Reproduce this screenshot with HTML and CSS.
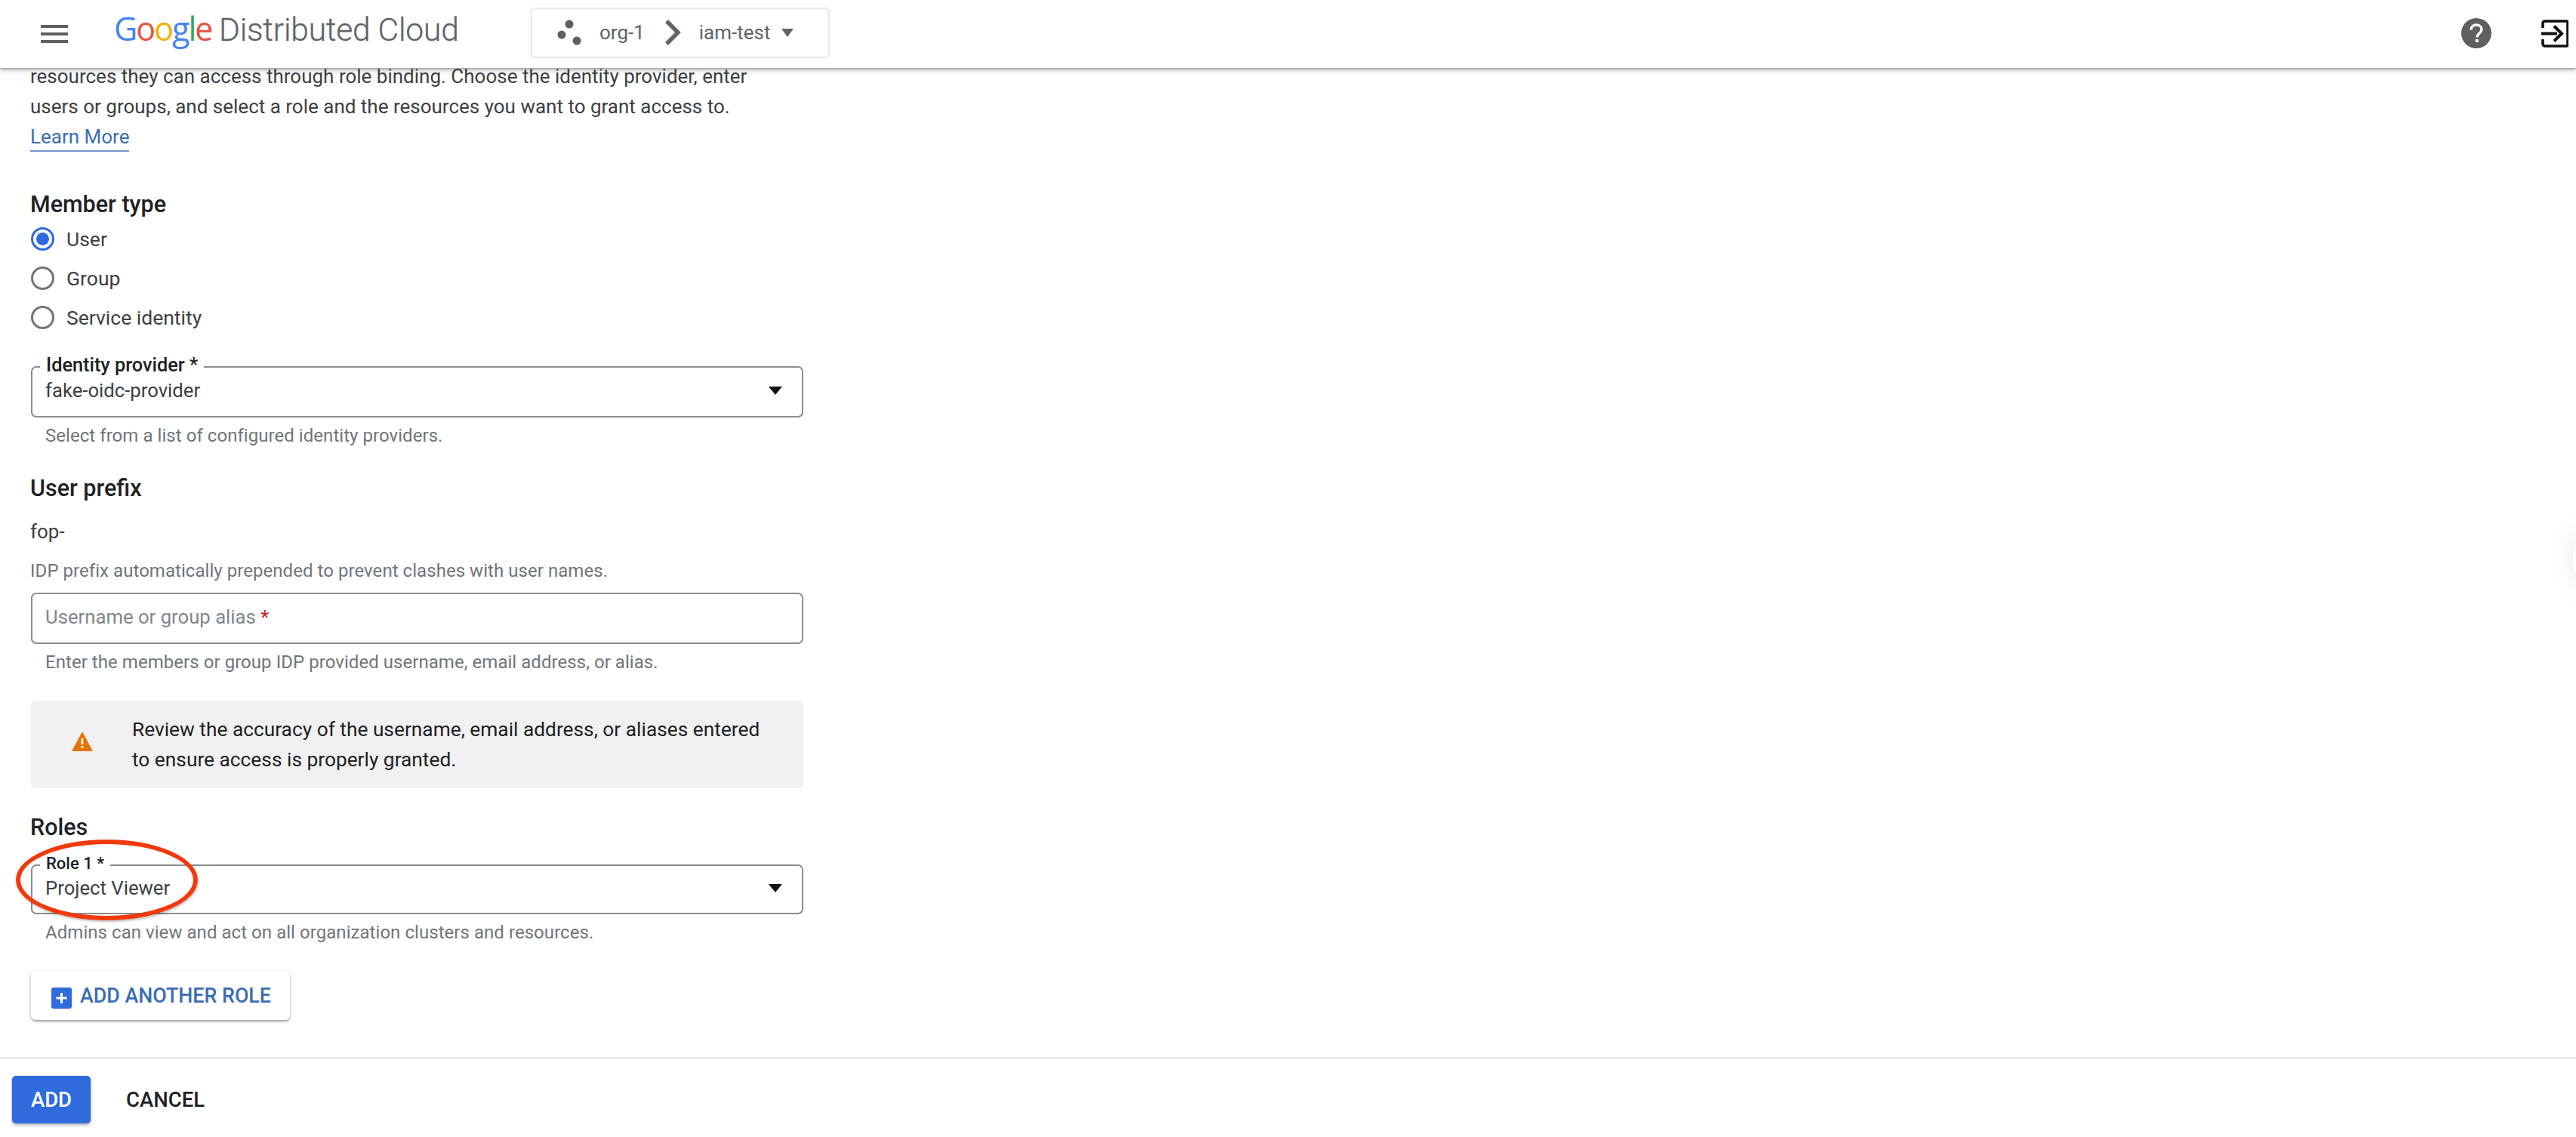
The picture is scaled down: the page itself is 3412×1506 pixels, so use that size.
FILE: index.html
```html
<!DOCTYPE html>
<html lang="en">
<head>
<meta charset="utf-8">
<title>Google Distributed Cloud</title>
<link rel="stylesheet" href="styles.css">
</head>
<body>
<header class="topbar">
  <svg class="menu-icon" viewBox="0 0 36 24"><path d="M0 0h36v4H0zM0 10h36v4H0zM0 20h36v4H0z"/></svg>
  <div class="logo"><span class="logo-google"><span class="g-blue">G</span><span class="g-red">o</span><span class="g-yellow">o</span><span class="g-blue">g</span><span class="g-green">l</span><span class="g-red">e</span></span><span class="logo-product">Distributed Cloud</span></div>
  <div class="selector">
    <svg class="org-icon" viewBox="0 0 32 34"><circle cx="16" cy="6" r="5.500"/><circle cx="6" cy="20" r="5.500"/><circle cx="26" cy="28" r="5.500"/></svg>
    <span class="sel-text">org-1</span>
    <svg class="chev" viewBox="0 0 24 34"><path d="M4 2l15 15L4 32" fill="none" stroke="#5f6368" stroke-width="5.500"/></svg>
    <span class="sel-text">iam-test</span>
    <span class="sel-caret"></span>
  </div>
  <div class="top-actions">
    <svg class="help-icon" viewBox="0 0 40 40"><circle cx="20" cy="20" r="20" fill="#5f5f5f"/><path d="M13 15.500c0-4 3-6.500 7-6.500s7 2.600 7 6c0 5-6 5-6 10.500" fill="none" stroke="#fff" stroke-width="3.400"/><rect x="18.800" y="28" width="4" height="4" fill="#fff"/></svg>
    <svg class="exit-icon" viewBox="0 0 36 37"><path d="M2 11V5a3 3 0 0 1 3-3h28a2 2 0 0 1 2 2v29a2 2 0 0 1-2 2H5a3 3 0 0 1-3-3v-6" fill="none" stroke="#111" stroke-width="3.600"/><path d="M0 16.500h21v4H0z" fill="#111"/><path d="M17 8.500l10 10-10 10" fill="none" stroke="#111" stroke-width="4"/></svg>
  </div>
</header>

<main class="content">
  <p class="intro">resources they can access through role binding. Choose the identity provider, enter<br>users or groups, and select a role and the resources you want to grant access to.<br><a class="learn" href="#">Learn More</a></p>

  <h2 class="section section-member">Member type</h2>
  <div class="radios">
    <label class="radio-row"><span class="radio radio-on"></span>User</label>
    <label class="radio-row"><span class="radio"></span>Group</label>
    <label class="radio-row"><span class="radio"></span>Service identity</label>
  </div>

  <div class="field field-idp">
    <span class="float-label">Identity provider *</span>
    <span class="value">fake-oidc-provider</span>
    <span class="caret"></span>
  </div>
  <p class="hint hint-inset">Select from a list of configured identity providers.</p>

  <h2 class="section section-prefix">User prefix</h2>
  <p class="prefix">fop-</p>
  <p class="hint hint-prefix">IDP prefix automatically prepended to prevent clashes with user names.</p>
  <div class="field field-user">
    <span class="placeholder">Username or group alias <span class="req">*</span></span>
  </div>
  <p class="hint hint-inset">Enter the members or group IDP provided username, email address, or alias.</p>

  <div class="notice">
    <svg class="warn-icon" viewBox="0 0 28 26"><path d="M14 0L28 26H0z" fill="#e37400"/><path d="M12.600 9h2.800v8h-2.800zM12.600 19h2.800v3h-2.800z" fill="#f1f1f1"/></svg>
    <p class="notice-text">Review the accuracy of the username, email address, or aliases entered<br>to ensure access is properly granted.</p>
  </div>

  <h2 class="section section-roles">Roles</h2>
  <div class="field field-role">
    <span class="float-label float-label-short">Role 1 *</span>
    <span class="value">Project Viewer</span>
    <span class="caret"></span>
    <span class="callout"></span>
  </div>
  <p class="hint hint-inset">Admins can view and act on all organization clusters and resources.</p>

  <button class="add-role" type="button">
    <svg class="plus-icon" viewBox="0 0 27 28"><rect width="27" height="28" rx="3" fill="#2f6bdc"/><path d="M12 7h3v5.500h5.500v3H15V21h-3v-5.500H6.500v-3H12z" fill="#fff"/></svg>
    ADD ANOTHER ROLE
  </button>
</main>

<span class="edge-glow"></span>

<footer class="actions">
  <button class="btn-primary" type="button">ADD</button>
  <button class="btn-text" type="button">CANCEL</button>
</footer>
</body>
</html>
```
FILE: styles.css
```css
* { box-sizing: border-box; }
html, body { margin: 0; height: 100%; }
body {
  height: 1506px;
  overflow: hidden;
  display: flex;
  flex-direction: column;
  position: relative;
  background: #fff;
  font-family: Roboto, "Liberation Sans", sans-serif;
  color: #3c4043;
}
p, h2 { margin: 0; }

/* Top bar */
.topbar {
  flex: none;
  height: 90px;
  display: flex;
  align-items: center;
  padding-left: 54px;
  background: #fff;
  position: relative;
  z-index: 2;
  box-shadow: 0 1px 2px #a0a0a0, 0 3px 6px rgba(0,0,0,.28);
}
.menu-icon { width: 36px; height: 24px; fill: #5f5f5f; flex: none; }
.logo { display: flex; align-items: baseline; margin-left: 61px; margin-top: -15px; width: 552px; flex: none; }
.logo-google { font-family: "Open Sans", sans-serif; font-size: 43px; letter-spacing: -2px; width: 139px; flex: none; }
.logo-product { font-size: 42.500px; color: #5f6368; font-weight: 300; -webkit-text-stroke: .3px #5f6368; letter-spacing: -.2px; white-space: nowrap; }
.g-blue { color: #4285f4; }
.g-red { color: #e8533f; }
.g-yellow { color: #f4b400; }
.g-green { color: #34a853; }
.selector {
  flex: none;
  width: 396px;
  height: 67px;
  margin-bottom: 4px;
  border: 2px solid #e8e8e8;
  border-radius: 6px;
  display: flex;
  align-items: center;
  padding-left: 33px;
}
.org-icon { width: 32px; height: 34px; fill: #5f5f5f; flex: none; margin-right: 24px; }
.sel-text { font-size: 26px; color: #5f6368; }
.chev { width: 24px; height: 34px; margin: 0 23px 0 25px; flex: none; }
.sel-caret { width: 0; height: 0; border: 8px solid transparent; border-top: 11px solid #5f6368; border-bottom: 0; margin-left: 15px; }
.top-actions { margin-left: auto; display: flex; align-items: center; gap: 66px; padding-right: 10px; margin-bottom: 2px; }
.help-icon { width: 40px; height: 40px; flex: none; }
.exit-icon { width: 36px; height: 37px; flex: none; }

/* Form */
.content { flex: 1; padding-left: 41px; min-height: 0; }
.intro { font-size: 26px; line-height: 40px; margin-top: -9px; margin-left: -1px; white-space: nowrap; }
.learn { color: #3a6db5; text-decoration: none; border-bottom: 2px solid #6f93c8; padding-bottom: 3px; }
.section { font-size: 30.500px; font-weight: 500; line-height: 36px; color: #202124; margin-left: -1px; }
.section-member { margin-top: 52px; }
.section-prefix { margin-top: 38px; }
.section-roles { margin-top: 34px; }

.radios { margin-top: 1px; }
.radio-row { display: flex; align-items: center; height: 52px; font-size: 26.500px; color: #3c4043; gap: 16px; }
.radio { width: 31px; height: 31px; border-radius: 50%; border: 3px solid #757575; background: #fff; flex: none; }
.radio-on { border-color: #2f6bdc; padding: 4px; background: #2f6bdc content-box; }

.field {
  width: 1023px;
  height: 68px;
  border: 2px solid #8c8c8c;
  border-radius: 7px;
  display: flex;
  align-items: center;
  padding: 0 18px;
  position: relative;
}
.field-idp { margin-top: 39px; }
.field-user { margin-top: 15px; }
.field-role { margin-top: 31px; height: 66px; }
.float-label {
  position: absolute;
  left: 10px;
  top: -15px;
  padding: 0 8px;
  background: #fff;
  font-size: 25.300px;
  font-weight: 500;
  line-height: 24px;
  color: #202124;
}
.float-label-short { font-size: 22px; }
.value { font-size: 25.700px; color: #3c4043; margin-top: -4px; margin-left: -1px; }
.placeholder { font-size: 25.700px; color: #80868b; margin-top: -4px; margin-left: -1px; }
.req { color: #c5221f; }
.caret { width: 0; height: 0; margin-left: auto; margin-top: -4px; margin-right: 8px; border: 9px solid transparent; border-top: 11px solid #111; border-bottom: 0; }
.callout {
  position: absolute;
  left: -22px;
  top: -35px;
  width: 241px;
  height: 107px;
  border: 6px solid #f03a0c;
  border-radius: 50%;
  box-shadow: 1px 2px 3px rgba(0,0,0,.25);
  pointer-events: none;
}

.hint { font-size: 24px; line-height: 28px; color: #70757a; white-space: nowrap; letter-spacing: .05px; }
.hint-inset { margin-top: 10px; padding-left: 19px; }
.prefix { font-size: 26px; line-height: 40px; margin-top: 19px; margin-left: -1px; color: #3c4043; }
.hint-prefix { margin-top: 18px; margin-left: -1px; }

.notice {
  width: 1023px;
  height: 116px;
  margin-top: 37px;
  background: #f1f1f1;
  border-radius: 6px;
  display: flex;
  align-items: center;
  padding-left: 54px;
}
.warn-icon { width: 28px; height: 26px; flex: none; margin-top: -8px; }
.notice-text { font-size: 26.300px; line-height: 40px; margin-left: 52px; color: #202124; white-space: nowrap; }

.add-role {
  display: flex;
  align-items: center;
  gap: 11px;
  width: 343px;
  height: 65px;
  margin-top: 37px;
  padding: 0 0 0 27px;
  background: #fff;
  border: 0;
  border-radius: 6px;
  box-shadow: 0 2px 3px rgba(0,0,0,.35), 0 0 6px rgba(0,0,0,.08);
  font-family: inherit;
  font-size: 26.800px;
  font-weight: 500;
  color: #3a6db5;
  white-space: nowrap;
}
.plus-icon { width: 27px; height: 28px; flex: none; margin-top: 6px; }

.edge-glow {
  position: absolute;
  right: -56px;
  top: 700px;
  width: 60px;
  height: 80px;
  border-radius: 50%;
  background: #fff;
  box-shadow: 0 0 36px rgba(0,0,0,.1);
}

/* Footer */
.actions {
  flex: none;
  height: 106px;
  border-top: 2px solid #e3e3e3;
  display: flex;
  align-items: flex-start;
  padding: 23px 0 0 16px;
  gap: 47px;
}
.btn-primary {
  width: 104px;
  height: 63px;
  background: #2f6bdc;
  color: #fff;
  border: 0;
  border-radius: 5px;
  font-family: inherit;
  font-size: 27.500px;
  font-weight: 500;
  box-shadow: 0 2px 4px rgba(0,0,0,.35);
}
.btn-text {
  height: 63px;
  padding: 0;
  background: none;
  border: 0;
  font-family: inherit;
  font-size: 27.500px;
  font-weight: 500;
  color: #202124;
}
```
